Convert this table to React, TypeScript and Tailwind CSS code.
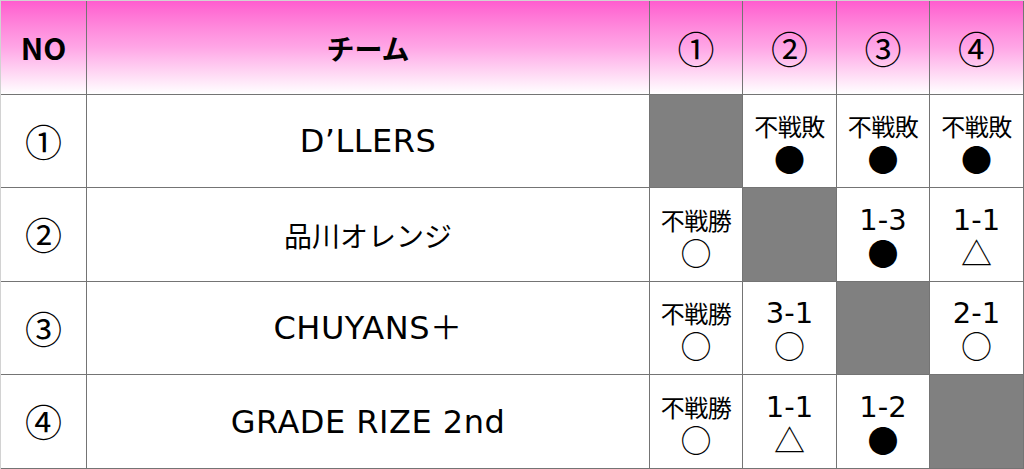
type Cell = { top: string; mark: string; score?: boolean } | null;

const rows: { no: string; name: string; jp?: boolean; cells: Cell[] }[] = [
  {
    no: '①',
    name: 'D’LLERS',
    cells: [
      null,
      { top: '不戦敗', mark: '●' },
      { top: '不戦敗', mark: '●' },
      { top: '不戦敗', mark: '●' },
    ],
  },
  {
    no: '②',
    name: '品川オレンジ',
    jp: true,
    cells: [
      { top: '不戦勝', mark: '○' },
      null,
      { top: '1-3', mark: '●', score: true },
      { top: '1-1', mark: '△', score: true },
    ],
  },
  {
    no: '③',
    name: 'CHUYANS＋',
    cells: [
      { top: '不戦勝', mark: '○' },
      { top: '3-1', mark: '○', score: true },
      null,
      { top: '2-1', mark: '○', score: true },
    ],
  },
  {
    no: '④',
    name: 'GRADE RIZE 2nd',
    cells: [
      { top: '不戦勝', mark: '○' },
      { top: '1-1', mark: '△', score: true },
      { top: '1-2', mark: '●', score: true },
      null,
    ],
  },
];

const head = 'flex items-center justify-center bg-linear-to-b from-[#ff5ccf] via-[#ffa6e6] to-white text-black';
const jp = "font-['Noto_Sans_CJK_JP',sans-serif]";

export default function App() {
  return (
    <div className="w-[1024px] h-[469px] bg-[#747474] border-t border-l border-[#d2d2d2] overflow-hidden">
      <div className="grid grid-cols-[85px_562px_92px_93px_92px_93px] grid-rows-[93px_92px_93px_92px_93px] gap-px pr-px pb-px font-['DejaVu_Sans','Noto_Sans_CJK_JP',sans-serif] text-black">
        {/* Header */}
        <div className={`${head} ${jp} text-[30px] font-bold`}>NO</div>
        <div className={`${head} ${jp} text-[28px] font-bold`}>チーム</div>
        {['①', '②', '③', '④'].map((n) => (
          <div key={n} className={`${head} ${jp} text-[37px] leading-none pt-[2px]`}>
            {n}
          </div>
        ))}

        {/* Rows */}
        {rows.map((row) => (
          <>
            <div key={row.no + 'n'} className={`flex items-center justify-center bg-white ${jp} text-[37px] leading-none`}>
              {row.no}
            </div>
            <div
              key={row.no + 't'}
              className={`flex items-center justify-center bg-white ${row.jp ? `${jp} text-[28px]` : 'text-[32px] tracking-[0.5px]'}`}
            >
              {row.name}
            </div>
            {row.cells.map((c, i) =>
              c ? (
                <div key={row.no + i} className="flex flex-col items-center justify-center bg-white pt-[2px]">
                  <div
                    className={
                      c.score
                        ? 'h-[32px] text-[29px] leading-[32px]'
                        : `h-[32px] ${jp} text-[24px] leading-[32px] tracking-[-0.5px]`
                    }
                  >
                    {c.top}
                  </div>
                  <div className={`h-[32px] ${jp} text-[31px] leading-[32px]`}>{c.mark}</div>
                </div>
              ) : (
                <div key={row.no + i} className="bg-[#808080]" />
              ),
            )}
          </>
        ))}
      </div>
    </div>
  );
}
